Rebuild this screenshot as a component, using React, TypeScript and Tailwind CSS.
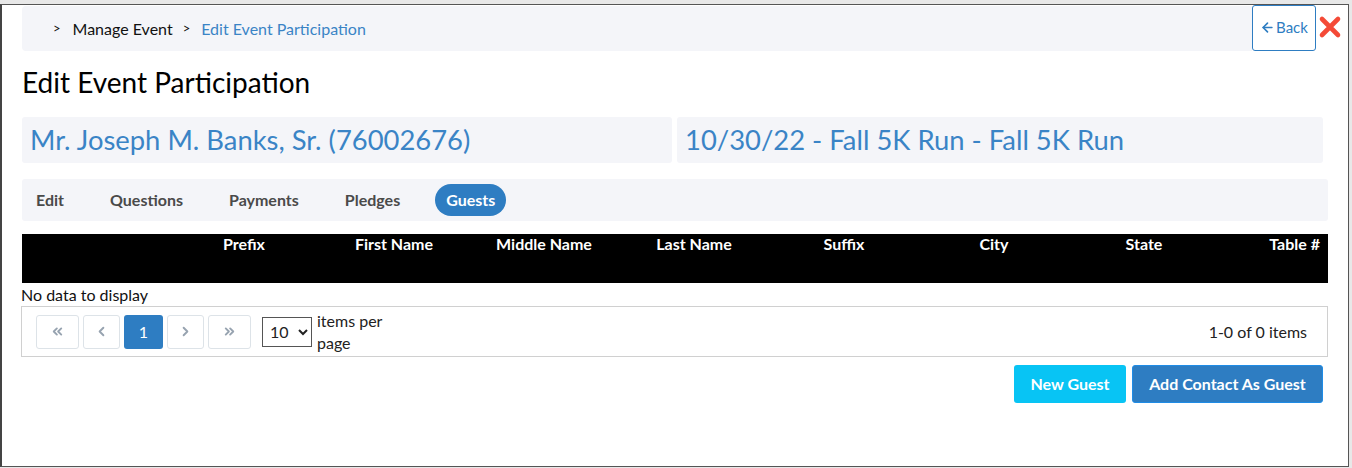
import { ArrowLeft, ChevronLeft, ChevronRight, ChevronsLeft, ChevronsRight } from "lucide-react";

const columns = ["Prefix", "First Name", "Middle Name", "Last Name", "Suffix", "City", "State"];
const tabs = ["Edit", "Questions", "Payments", "Pledges"];

export default function App() {
    return (
        <div className="w-[1352px] h-[468px] bg-[#e8e8e8] pt-[4px] overflow-hidden" style={{ fontFamily: "Lato, 'Open Sans', sans-serif" }}>
            <div className="w-[1349px] h-[463px] bg-white border border-[#555] border-l-2 border-l-[#444]">
                {/* header row */}
                <div className="flex items-start pl-[20px] pr-[4px]">
                    <div className="flex-1 h-[45px] mt-[1px] bg-[#f4f5f9] rounded-l-[4px] flex items-center pl-[31px] text-[16px] text-[#111]">
                        <span className="text-[13px] mr-[12px]">&gt;</span>
                        <span>Manage Event</span>
                        <span className="text-[13px] ml-[10px] mr-[11px]">&gt;</span>
                        <span className="text-[#3a84c6]">Edit Event Participation</span>
                    </div>
                    <button className="w-[64px] h-[46px] border border-[#2e7dc2] rounded-[3px] flex items-center justify-center text-[15px] text-[#2e7dc2] bg-white pb-[1px]">
                        <ArrowLeft size={15} strokeWidth={2.6} className="mr-[1px]" />
                        Back
                    </button>
                    <div className="w-[28px] h-[46px] flex items-start justify-center pt-[10px]">
                        <svg width="24" height="24" viewBox="0 0 24 24">
                            <path d="M4 4 L20 20 M20 4 L4 20" stroke="#f44a37" strokeWidth="4.6" strokeLinecap="round" />
                        </svg>
                    </div>
                </div>

                <div className="px-[20px]">
                    <h1 className="text-[28px] leading-[34px] text-black mt-[14px]">Edit Event Participation</h1>

                    <div className="flex gap-[5px] mt-[18px]">
                        <div className="w-[650px] h-[46px] bg-[#f4f5f9] rounded-[3px] flex items-center pl-[8px] text-[27.4px] text-[#3a84c6]">
                            Mr. Joseph M. Banks, Sr. (76002676)
                        </div>
                        <div className="w-[646px] h-[46px] bg-[#f4f5f9] rounded-[3px] flex items-center pl-[8px] text-[27.4px] text-[#3a84c6]">
                            10/30/22 - Fall 5K Run - Fall 5K Run
                        </div>
                    </div>

                    <div className="mt-[16px] h-[42px] bg-[#f4f5f9] rounded-[3px] flex items-center pl-[14px] text-[16px] font-bold text-[#4a4a4a]">
                        {tabs.map((t) => (
                            <span key={t} className="mr-[46px]">{t}</span>
                        ))}
                        <span className="-ml-[11px] bg-[#2e7dc2] text-white rounded-full px-[11px] h-[32px] flex items-center">Guests</span>
                    </div>

                    <div className="mt-[13px] h-[49px] bg-black flex items-start pt-0 text-[16px] leading-[20px] font-bold text-white">
                        <div className="w-[147px] shrink-0" />
                        {columns.map((c) => (
                            <div key={c} className="w-[150px] shrink-0 text-center">{c}</div>
                        ))}
                        <div className="flex-1 text-right pr-[8px]">Table #</div>
                    </div>

                    <div className="-ml-[1px] text-[16px] text-[#111] leading-[22px] mt-[1px]">No data to display</div>

                    <div className="-ml-[1px] h-[51px] border border-[#d0d0d0] flex items-center pl-[14px] pr-[20px] text-[16px] text-[#222]">
                        <div className="flex gap-[4px]">
                            <div className="w-[43px] h-[34px] border border-[#dde3e8] rounded-[3px] flex items-center justify-center text-[#97a3b0]">
                                <ChevronsLeft size={15} strokeWidth={3} />
                            </div>
                            <div className="w-[37px] h-[34px] border border-[#dde3e8] rounded-[3px] flex items-center justify-center text-[#97a3b0]">
                                <ChevronLeft size={15} strokeWidth={3} />
                            </div>
                            <div className="w-[39px] h-[34px] bg-[#2e7dc2] rounded-[3px] flex items-center justify-center text-white">1</div>
                            <div className="w-[37px] h-[34px] border border-[#dde3e8] rounded-[3px] flex items-center justify-center text-[#97a3b0]">
                                <ChevronRight size={15} strokeWidth={3} />
                            </div>
                            <div className="w-[43px] h-[34px] border border-[#dde3e8] rounded-[3px] flex items-center justify-center text-[#97a3b0]">
                                <ChevronsRight size={15} strokeWidth={3} />
                            </div>
                        </div>
                        <select className="ml-[11px] w-[50px] h-[30px] border border-[#555] text-[16px] pl-[3px] bg-white" defaultValue="10">
                            <option>10</option>
                            <option>20</option>
                        </select>
                        <div className="ml-[5px] leading-[22px] w-[80px]">items per page</div>
                        <div className="ml-auto">1-0 of 0 items</div>
                    </div>

                    <div className="flex justify-end gap-[6px] mt-[8px] pr-[5px]">
                        <button className="w-[112px] h-[38px] bg-[#08c4f4] rounded-[3px] text-white font-bold text-[16px]">New Guest</button>
                        <button className="w-[191px] h-[38px] bg-[#2e7dc2] border border-[#1f8ce6] rounded-[3px] text-white font-bold text-[16px]">Add Contact As Guest</button>
                    </div>
                </div>
            </div>
        </div>
    );
}
